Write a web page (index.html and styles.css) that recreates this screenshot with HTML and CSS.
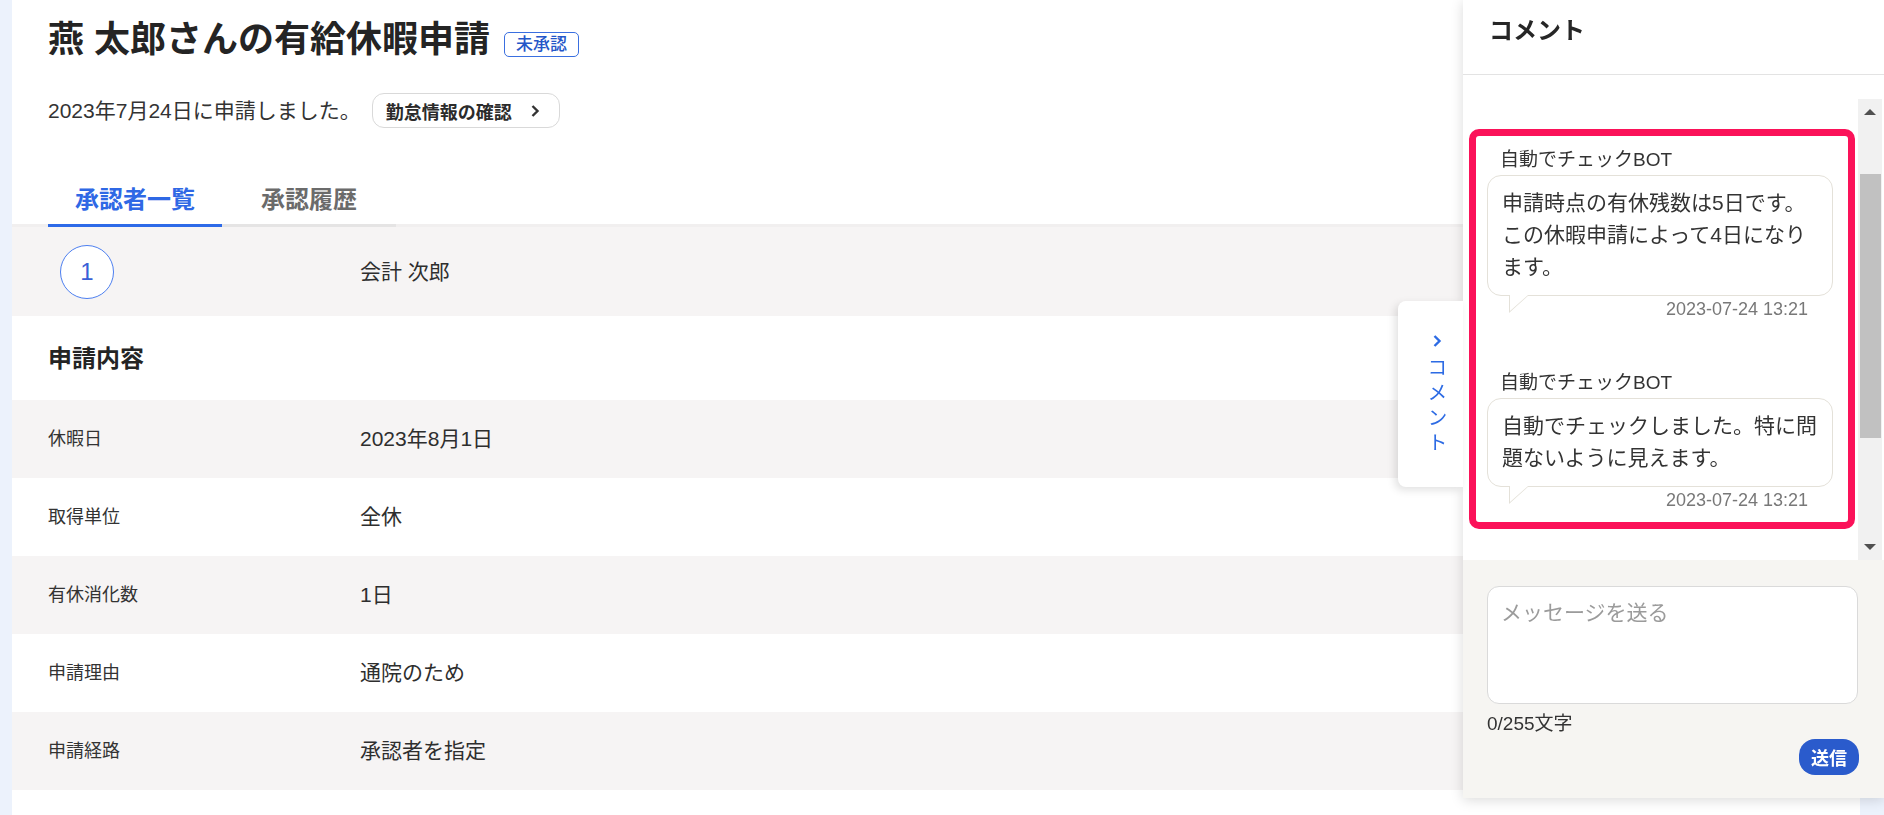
FILE: index.html
```html
<!DOCTYPE html>
<html lang="ja">
<head>
    <meta charset="UTF-8">
    <meta name="viewport" content="width=device-width, initial-scale=1.0">
    <title>有給休暇申請</title>
    <link rel="stylesheet" href="styles.css">
</head>
<body>
    <main class="main">
        <header class="head">
            <div class="title-row">
                <h1>燕 太郎さんの有給休暇申請</h1>
                <span class="badge">未承認</span>
            </div>
            <div class="sub-row">
                <p>2023年7月24日に申請しました。</p>
                <button class="link-btn">勤怠情報の確認
                    <svg width="10" height="14" viewBox="0 0 10 14"><path d="M2.5 2l5 5-5 5" fill="none" stroke="#333" stroke-width="2.4"/></svg>
                </button>
            </div>
        </header>

        <nav class="tabs">
            <a class="tab active">承認者一覧</a>
            <a class="tab">承認履歴</a>
        </nav>

        <div class="approver-row">
            <div><span class="step">1</span></div>
            <div class="approver-name">会計 次郎</div>
        </div>

        <h2 class="section-title">申請内容</h2>

        <div class="details">
            <div class="detail-row"><span class="label">休暇日</span><span class="value">2023年8月1日</span></div>
            <div class="detail-row"><span class="label">取得単位</span><span class="value">全休</span></div>
            <div class="detail-row"><span class="label">有休消化数</span><span class="value">1日</span></div>
            <div class="detail-row"><span class="label">申請理由</span><span class="value">通院のため</span></div>
            <div class="detail-row"><span class="label">申請経路</span><span class="value">承認者を指定</span></div>
        </div>
    </main>

    <aside class="comments">
        <button class="toggle">
            <svg width="10" height="14" viewBox="0 0 10 14"><path d="M2.5 2l5 5-5 5" fill="none" stroke="#2d6be4" stroke-width="2.4"/></svg>
            <span class="toggle-text">コメント</span>
        </button>

        <div class="comments-head">
            <h2>コメント</h2>
        </div>

        <div class="scroll-box">
            <div class="thread">
                <div class="highlight">
                    <div class="message">
                        <div class="author">自動でチェックBOT</div>
                        <div class="bubble">申請時点の有休残数は5日です。この休暇申請によって4日になります。</div>
                        <div class="time">2023-07-24 13:21</div>
                    </div>
                    <div class="message">
                        <div class="author">自動でチェックBOT</div>
                        <div class="bubble">自動でチェックしました。特に問題ないように見えます。</div>
                        <div class="time">2023-07-24 13:21</div>
                    </div>
                </div>
            </div>
            <div class="scrollbar">
                <div class="sb-btn"><span class="arrow-up"></span></div>
                <div class="sb-thumb"></div>
                <div class="sb-fill"></div>
                <div class="sb-btn"><span class="arrow-down"></span></div>
            </div>
        </div>

        <form class="composer">
            <textarea placeholder="メッセージを送る"></textarea>
            <div class="counter">0/255文字</div>
            <button type="submit" class="send-btn">送信</button>
        </form>
    </aside>
</body>
</html>
```

FILE: styles.css
```css
body {
    margin: 0;
    background-color: #ecf2fc;
    font-family: "Liberation Sans", "Noto Sans CJK JP", sans-serif;
    color: #333;
}

button,
textarea {
    font-family: inherit;
}

.main {
    margin: 0 24px 0 12px;
    min-height: 100vh;
    background: #fff;
}

.head {
    padding: 16px 36px 0;
}

.title-row {
    display: flex;
    align-items: center;
    gap: 14px;
}

h1 {
    margin: 0;
    font-size: 36px;
    line-height: 48px;
    font-weight: bold;
    color: #242424;
}

.badge {
    margin-top: 9px;
    height: 25px;
    padding: 0 11px;
    box-sizing: border-box;
    border: 1px solid #3a6fe0;
    border-radius: 5px;
    color: #2456c8;
    font-size: 17px;
    line-height: 23px;
    font-weight: 500;
}

.sub-row {
    display: flex;
    align-items: center;
    gap: 11px;
    margin-top: 29px;
}

.sub-row p {
    margin: 0;
    font-size: 21px;
    line-height: 28px;
}

.link-btn {
    display: flex;
    align-items: center;
    gap: 18px;
    height: 35px;
    padding: 0 19px 0 13px;
    background: #fff;
    border: 1px solid #d9d9d9;
    border-radius: 12px;
    font-size: 18px;
    font-weight: bold;
    color: #2b2b2b;
}

.tabs {
    display: flex;
    margin-top: 56px;
    padding: 0 36px;
    box-shadow: inset 0 -3px 0 #f1efef;
}

.tab {
    width: 174px;
    padding-bottom: 8px;
    border-bottom: 3px solid #e5e4e4;
    text-align: center;
    font-size: 24px;
    line-height: 32px;
    font-weight: bold;
    color: #6b6b6b;
}

.tab.active {
    color: #2f68e5;
    border-bottom-color: #2d6ae8;
}

.approver-row,
.detail-row {
    display: grid;
    grid-template-columns: 312px 1fr;
    align-items: center;
    box-sizing: border-box;
    padding: 0 0 4px 36px;
}

.approver-row {
    height: 89px;
    background: #f6f4f4;
}

.step {
    display: flex;
    align-items: center;
    justify-content: center;
    width: 54px;
    height: 54px;
    margin: 4px 0 0 12px;
    box-sizing: border-box;
    border: 1px solid #4d7ff0;
    border-radius: 50%;
    background: #fff;
    color: #3a60d6;
    font-size: 24px;
}

.approver-name,
.value {
    font-size: 21px;
    color: #2e2e2e;
}

.section-title {
    display: flex;
    align-items: center;
    height: 84px;
    box-sizing: border-box;
    margin: 0;
    padding: 0 0 4px 36px;
    font-size: 24px;
    font-weight: bold;
    color: #242424;
}

.detail-row {
    height: 78px;
}

.detail-row:nth-child(odd) {
    background: #f6f4f4;
}

.label {
    font-size: 18px;
    color: #333;
}

/* comment drawer */
.comments {
    position: fixed;
    top: 0;
    right: 0;
    width: 421px;
    display: flex;
    flex-direction: column;
    background: #fff;
    box-shadow: 0 2px 12px rgba(0, 0, 0, 0.15);
}

.toggle {
    position: absolute;
    right: 100%;
    top: 301px;
    width: 65px;
    height: 186px;
    padding: 33px 0 0 13px;
    display: flex;
    flex-direction: column;
    align-items: center;
    background: #fff;
    border: none;
    border-radius: 8px 0 0 8px;
    box-shadow: -3px 3px 8px rgba(0, 0, 0, 0.12);
    color: #2d6be4;
}

.toggle-text {
    margin-top: 9px;
    writing-mode: vertical-rl;
    font-family: "Noto Sans CJK JP", sans-serif;
    font-size: 20px;
    line-height: 20px;
    letter-spacing: 5px;
}

.comments-head {
    height: 75px;
    box-sizing: border-box;
    padding: 15px 26px 0;
    border-bottom: 1px solid #e3e3e3;
}

.comments-head h2 {
    margin: 0;
    font-size: 24px;
    line-height: 32px;
    font-weight: bold;
    color: #262626;
}

.scroll-box {
    display: flex;
    height: 461px;
    margin-top: 24px;
    padding-right: 2px;
}

.thread {
    flex: 1;
    padding-top: 30px;
    overflow: hidden;
}

.highlight {
    margin: 0 3px 0 6px;
    padding: 12px 15px 11px 11px;
    border: 7px solid #fb1259;
    border-radius: 10px;
}

.message + .message {
    margin-top: 51px;
}

.author {
    padding-left: 13px;
    font-size: 19px;
    line-height: 24px;
    color: #333;
}

.bubble {
    position: relative;
    margin-top: 3px;
    padding: 11px 14px 12px;
    border: 1px solid #e4e1d9;
    border-radius: 14px;
    font-size: 21px;
    line-height: 32px;
    color: #333;
}

.bubble::before,
.bubble::after {
    content: "";
    position: absolute;
    top: 100%;
    width: 0;
    height: 0;
}

.bubble::before {
    left: 21px;
    border-top: 18px solid #e4e1d9;
    border-right: 20px solid transparent;
}

.bubble::after {
    left: 22px;
    border-top: 16px solid #fff;
    border-right: 18px solid transparent;
}

.time {
    margin-top: 2px;
    padding-right: 25px;
    text-align: right;
    font-size: 18px;
    line-height: 22px;
    color: #787878;
}

.scrollbar {
    display: flex;
    flex-direction: column;
    width: 24px;
    background: #f1f1f1;
}

.sb-btn {
    display: flex;
    align-items: center;
    justify-content: center;
    height: 26px;
}

.arrow-up,
.arrow-down {
    width: 0;
    height: 0;
    border-left: 6px solid transparent;
    border-right: 6px solid transparent;
}

.arrow-up {
    border-bottom: 6px solid #505050;
}

.arrow-down {
    border-top: 6px solid #505050;
}

.sb-thumb {
    height: 264px;
    margin: 49px 1px 0 2px;
    background: #c1c1c1;
}

.sb-fill {
    flex: 1;
}

.composer {
    display: flex;
    flex-direction: column;
    margin: 0;
    padding: 26px 26px 23px 24px;
    background: #f6f5f2;
}

.composer textarea {
    height: 118px;
    box-sizing: border-box;
    padding: 11px 13px;
    border: 1px solid #dadada;
    border-radius: 12px;
    background: #fff;
    font-size: 21px;
    line-height: 30px;
    resize: none;
    outline: none;
}

.composer textarea::placeholder {
    color: #9b9b9b;
}

.counter {
    margin-top: 8px;
    font-size: 19px;
    line-height: 24px;
    color: #333;
}

.send-btn {
    align-self: flex-end;
    height: 36px;
    margin: 3px -1px 0 0;
    padding: 0 12px;
    border: none;
    border-radius: 16px;
    background: #2a5bcc;
    color: #fff;
    font-size: 18px;
    font-weight: bold;
}
```
